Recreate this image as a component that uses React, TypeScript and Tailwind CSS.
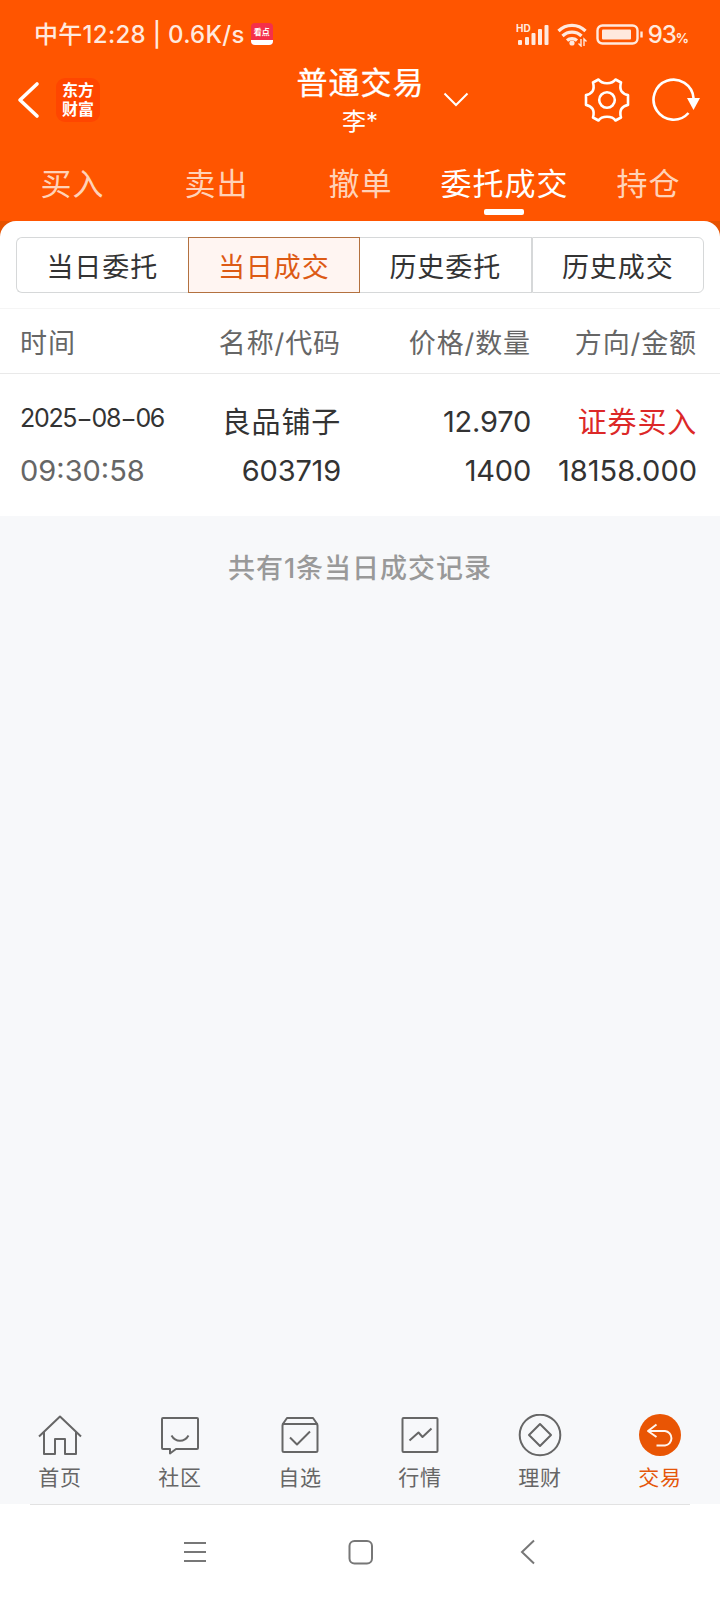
import React from 'react';

const tabs = ['买入', '卖出', '撤单', '委托成交', '持仓'];
const segments = ['当日委托', '当日成交', '历史委托', '历史成交'];

const StatusBar = () => (
  <div className="flex h-[68px] items-center justify-between pl-[34px] pr-[32px] pt-[2px] text-[#ffe9de]">
    <div className="flex items-center font-medium">
      <span className="text-[24px] leading-none tracking-[0.3px]">中午12:28 | 0.6K/s</span>
      <div className="mb-[3px] ml-[6px] flex h-[22px] w-[22px] flex-col items-center overflow-hidden rounded-[4px] bg-[#f5304a]">
        <span className="mt-[5px] whitespace-nowrap text-[8px] font-bold leading-[9px] text-white">看点</span>
        <div className="mt-auto h-[5px] w-full bg-white" />
      </div>
    </div>
    <div className="flex items-center">
      <svg width="34" height="24" viewBox="0 0 34 24" fill="currentColor">
        <text x="0" y="8.500" fontSize="10" fontWeight="700">HD</text>
        <rect x="2" y="17" width="4" height="5" rx="1" />
        <rect x="9" y="14" width="4" height="8" rx="1" />
        <rect x="15.500" y="10" width="4" height="12" rx="1" />
        <rect x="22" y="6" width="4" height="16" rx="1" />
        <rect x="28.500" y="2" width="4" height="20" rx="1" />
      </svg>
      <svg className="ml-[7px]" width="30" height="24" viewBox="0 0 30 24" fill="none" stroke="currentColor" strokeWidth="3.200">
        <path d="M1.500 8a19 19 0 0 1 27 0" />
        <path d="M5.500 13a13.500 13.500 0 0 1 19 0" />
        <path d="M10 17.500a7.500 7.500 0 0 1 10 0" />
        <circle cx="15" cy="20" r="2.600" fill="currentColor" stroke="none" />
        <path d="M24 16v7l-2.500-2.500M27 23v-7l2.500 2.500" strokeWidth="1.400" />
      </svg>
      <svg className="ml-[9px]" width="48" height="22" viewBox="0 0 48 22" fill="none">
        <rect x="1.500" y="1.500" width="40" height="18" rx="5" stroke="currentColor" strokeWidth="2.400" />
        <rect x="6" y="5.500" width="29" height="10" rx="1" fill="currentColor" />
        <path d="M45.500 7.500v6" stroke="currentColor" strokeWidth="2.400" />
      </svg>
      <span className="ml-[4px] text-[24px] font-medium leading-none tracking-[-1px]">93<span className="text-[13px] font-bold">%</span></span>
    </div>
  </div>
);

const TitleBar = () => (
  <div className="grid h-[76px] grid-cols-[1fr_auto_1fr] items-center">
    <div className="flex items-center pb-[12px] pl-[17px]">
      <svg width="24" height="38" viewBox="0 0 24 38" fill="none" stroke="#fff" strokeWidth="3.600" strokeLinecap="round" strokeLinejoin="round">
        <path d="M20 3L3 19l17 16" />
      </svg>
      <div className="ml-[15px] flex h-[44px] w-[44px] flex-col items-center justify-center rounded-[9px] bg-[#ff4600] text-[16px] font-bold leading-[19px] text-white">
        <span>东方</span>
        <span>财富</span>
      </div>
    </div>
    <div className="flex flex-col items-center self-start text-white">
      <span className="pl-[1px] text-[31px] leading-[30px] tracking-[1px] [-webkit-text-stroke:0.3px_white]">普通交易</span>
      <span className="mt-[9px] text-[24px] leading-[30px]">李*</span>
    </div>
    <div className="flex items-center pb-[12px] text-white">
      <svg className="ml-[18px]" width="26" height="16" viewBox="0 0 26 16" fill="none" stroke="currentColor" strokeWidth="2">
        <path d="M1.500 1.500L13 13l11.500-11.500" />
      </svg>
      <svg className="mb-px ml-auto" width="46" height="46" viewBox="-23 -23 46 46" fill="none" stroke="currentColor" strokeWidth="2.600" strokeLinejoin="round">
        <path d="M-8.500 -20.500Q-6 -16.800 0 -16.800Q6 -16.800 8.500 -20.500L14 -17.500Q12.500 -12 14.500 -8.800Q16.500 -5.800 21 -5L21 5Q16.500 5.800 14.500 8.800Q12.500 12 14 17.500L8.500 20.500Q6 16.800 0 16.800Q-6 16.800 -8.500 20.500L-14 17.500Q-12.500 12 -14.500 8.800Q-16.500 5.800 -21 5L-21 -5Q-16.500 -5.800 -14.500 -8.800Q-12.500 -12 -14 -17.500Z" />
        <circle r="7.800" />
      </svg>
      <svg className="mb-[2px] ml-[21px] mr-[19px]" width="50" height="46" viewBox="0 0 50 46" fill="none" stroke="currentColor" strokeWidth="2.600">
        <path d="M37.500 37A20 20 0 1 1 42.500 22" />
        <path d="M36 22h13l-6.500 12z" fill="currentColor" stroke="none" />
      </svg>
    </div>
  </div>
);

const Tabs = () => (
  <div className="grid h-[77px] grid-cols-5 pt-[20px]">
    {tabs.map((tab) => (
      <div key={tab} className={`flex flex-col items-center ${tab === '委托成交' ? 'text-white' : 'text-[#ffd2b8]'}`}>
        <span className="whitespace-nowrap pl-[1px] text-[31px] leading-[40px] tracking-[1px]">{tab}</span>
        {tab === '委托成交' && <div className="mt-[5px] h-[6px] w-[40px] rounded-[2px] bg-white" />}
      </div>
    ))}
  </div>
);

const SegmentControl = () => (
  <div className="flex h-[87px] px-[16px] pt-[16px]">
    {segments.map((label, i) => {
      const active = i === 1;
      return (
        <div
          key={label}
          className={`flex h-[56px] flex-1 items-center justify-center border pt-[4px] text-[27px] leading-none tracking-[0.9px] ${
            active ? 'border-[#b3713f] bg-[#fff5f2] text-[#dd5a14]' : 'border-[#d6d8d9] text-[#333]'
          } ${i === 0 ? 'rounded-l-[6px] border-r-0' : ''} ${i === 2 ? 'border-l-0' : ''} ${i === 3 ? 'rounded-r-[6px]' : ''}`}
        >
          {label}
        </div>
      );
    })}
  </div>
);

const columns = 'grid grid-cols-[161px_160px_190px_166px] pl-[20px]';

const RecordTable = () => (
  <div>
    <div className={`${columns} h-[66px] items-center border-b border-t border-b-[#e9e9e9] border-t-[#f5f5f5] pt-[4px] text-[27px] leading-none tracking-[0.9px] text-[#666]`}>
      <span>时间</span>
      <span className="text-right">名称/代码</span>
      <span className="text-right">价格/数量</span>
      <span className="text-right">方向/金额</span>
    </div>
    <div className={`${columns} h-[142px] pt-[24px] text-[#333]`}>
      <div className="flex flex-col">
        <span className="h-[48px] whitespace-nowrap text-[25px] leading-[40px] tracking-[-1.300px]">2025−08−06</span>
        <span className="text-[29px] leading-[50px] text-[#666]">09:30:58</span>
      </div>
      <div className="flex flex-col text-right">
        <span className="h-[48px] text-[29px] leading-[49px] tracking-[0.8px]">良品铺子</span>
        <span className="text-[29px] leading-[50px] tracking-[-0.2px]">603719</span>
      </div>
      <div className="flex flex-col pl-px text-right">
        <span className="h-[48px] text-[29px] leading-[48px] tracking-[-0.2px]">12.970</span>
        <span className="text-[29px] leading-[50px] tracking-[-0.2px]">1400</span>
      </div>
      <div className="flex flex-col text-right">
        <span className="h-[48px] text-[29px] leading-[49px] tracking-[0.8px] text-[#dc2828]">证券买入</span>
        <span className="text-[29px] leading-[50px]">18158.000</span>
      </div>
    </div>
  </div>
);

const navItems = [
  {
    label: '首页',
    icon: (
      <>
        <path d="M1 22.500L22 2.500l21 20" />
        <path d="M6 18v22h11V25h10v15h11V18" />
      </>
    ),
  },
  {
    label: '社区',
    icon: (
      <>
        <path d="M5 4h34a1 1 0 0 1 1 1v29a1 1 0 0 1-1 1H18l-6 4.500V35H5a1 1 0 0 1-1-1V5a1 1 0 0 1 1-1z" />
        <path d="M13.500 21.500c4 7 13 7 17 0" />
      </>
    ),
  },
  {
    label: '自选',
    icon: (
      <>
        <rect x="4.500" y="10" width="35" height="28" rx="1.500" />
        <path d="M4.500 10.500L9 4h26l4.500 6.500" />
        <path d="M12 23.500l7 7L32 17.500" />
      </>
    ),
  },
  {
    label: '行情',
    icon: (
      <>
        <rect x="4.500" y="4" width="35" height="34" rx="1" />
        <path d="M11.500 26.500l9-8 4 4.500 9-8.500" />
      </>
    ),
  },
  {
    label: '理财',
    icon: (
      <>
        <circle cx="22" cy="21" r="20.300" />
        <path d="M22 10l11 11-11 11-11-11z" />
      </>
    ),
  },
  {
    label: '交易',
    icon: (
      <>
        <circle cx="22" cy="21" r="21" fill="#e95504" stroke="none" />
        <path d="M18.500 10.500L10 17l8.500 6M10 17h17a7.300 7.300 0 0 1 0 14.500h-8.500" stroke="#fff5ef" />
      </>
    ),
  },
];

const BottomNav = () => (
  <nav className="grid h-[109px] grid-cols-6 pt-[19px]">
    {navItems.map(({ label, icon }) => (
      <div key={label} className={`flex flex-col items-center ${label === '交易' ? 'text-[#e5560a]' : 'text-[#666]'}`}>
        <svg width="44" height="44" viewBox="0 0 44 44" fill="none" stroke="currentColor" strokeWidth="2" strokeLinejoin="round">
          {icon}
        </svg>
        <span className="text-[21px] leading-[40px] tracking-[0.8px]">{label}</span>
      </div>
    ))}
  </nav>
);

const SystemNav = () => (
  <div className="h-[96px] bg-white px-[30px]">
    <div className="grid h-full grid-cols-[1fr_auto_1fr] items-center border-t border-[#e2e2e2] pb-[2px]">
      <svg className="ml-[154px]" width="22" height="22" viewBox="0 0 22 22" stroke="#777" strokeWidth="2">
        <path d="M0 2h22M0 11h22M0 20h22" />
      </svg>
      <svg width="26" height="26" viewBox="0 0 26 26" fill="none" stroke="#777" strokeWidth="2">
        <rect x="2.500" y="2" width="22.500" height="22.500" rx="5" />
      </svg>
      <svg className="ml-[147px]" width="16" height="26" viewBox="0 0 16 26" fill="none" stroke="#777" strokeWidth="2">
        <path d="M14 1.500L2 13l12 11.500" />
      </svg>
    </div>
  </div>
);

export default function App() {
  return (
    <div className="flex h-[1600px] w-[720px] flex-col overflow-hidden bg-[#f7f8fa] font-['Inter','Noto_Sans_CJK_SC',sans-serif]">
      <div className="bg-[#ff5500]">
        <StatusBar />
        <TitleBar />
        <Tabs />
      </div>
      <div className="bg-[#e65200]">
        <div className="rounded-t-[16px] bg-white">
          <SegmentControl />
          <RecordTable />
        </div>
      </div>
      <div className="flex-1 pt-[33px] text-center text-[27px] font-medium leading-[40px] tracking-[1px] text-[#999]">共有1条当日成交记录</div>
      <BottomNav />
      <SystemNav />
    </div>
  );
}
